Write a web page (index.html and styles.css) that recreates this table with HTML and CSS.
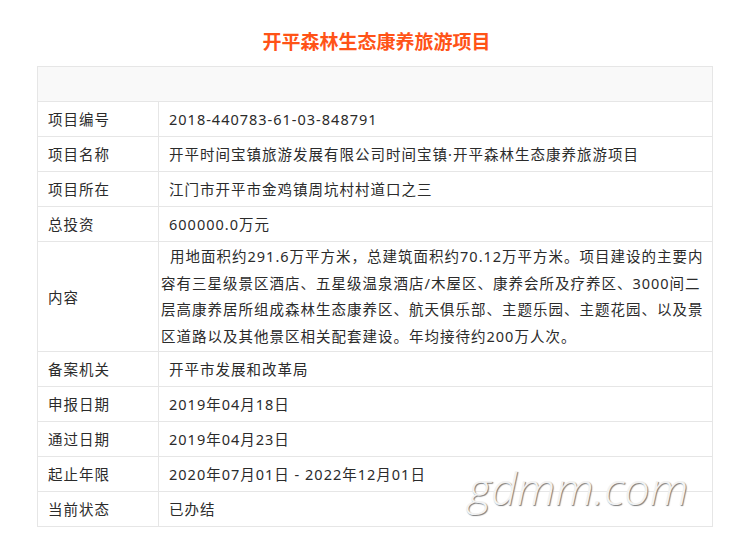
FILE: index.html
```html
<!DOCTYPE html>
<html lang="zh-CN">
<head>
  <meta charset="UTF-8" />
  <meta name="viewport" content="width=device-width, initial-scale=1" />
  <title>开平森林生态康养旅游项目</title>
  <link rel="stylesheet" href="styles.css">
</head>
<body>

  <div class="page">
    <h1 class="project-title">开平森林生态康养旅游项目</h1>

    <table class="info-table">
      <tr class="head-row">
        <td colspan="2"></td>
      </tr>
      <tr>
        <td class="label">项目编号</td>
        <td>2018-440783-61-03-848791</td>
      </tr>
      <tr>
        <td class="label">项目名称</td>
        <td>开平时间宝镇旅游发展有限公司时间宝镇·开平森林生态康养旅游项目</td>
      </tr>
      <tr>
        <td class="label">项目所在</td>
        <td>江门市开平市金鸡镇周坑村村道口之三</td>
      </tr>
      <tr>
        <td class="label">总投资</td>
        <td>600000.0万元</td>
      </tr>
      <tr>
        <td class="label">内容</td>
        <td class="content">用地面积约291.6万平方米，总建筑面积约70.12万平方米。项目建设的主要内容有三星级景区酒店、五星级温泉酒店/木屋区、康养会所及疗养区、3000间二层高康养居所组成森林生态康养区、航天俱乐部、主题乐园、主题花园、以及景区道路以及其他景区相关配套建设。年均接待约200万人次。</td>
      </tr>
      <tr>
        <td class="label">备案机关</td>
        <td>开平市发展和改革局</td>
      </tr>
      <tr>
        <td class="label">申报日期</td>
        <td>2019年04月18日</td>
      </tr>
      <tr>
        <td class="label">通过日期</td>
        <td>2019年04月23日</td>
      </tr>
      <tr>
        <td class="label">起止年限</td>
        <td>2020年07月01日 - 2022年12月01日</td>
      </tr>
      <tr>
        <td class="label">当前状态</td>
        <td>已办结</td>
      </tr>
    </table>

    <div class="watermark">gdmm.com</div>
  </div>

</body>
</html>
```

FILE: styles.css
```css
* {
  box-sizing: border-box;
  margin: 0;
  padding: 0;
}

body {
  font-family: 'Noto Sans', 'Noto Sans CJK SC', sans-serif;
  background: #fff;
  color: #2b2b2b;
}

.page {
  position: relative;
  padding: 30px 24px 20px 37px;
}

.project-title {
  font-size: 19px;
  line-height: 24px;
  font-weight: 700;
  color: #ff5317;
  text-align: center;
  margin-bottom: 12px;
  padding-left: 3px;
}

.info-table {
  width: 100%;
  border-collapse: collapse;
  border: 1px solid #e6e6e6;
  font-size: 14.5px;
  letter-spacing: 1px;
}

.info-table td {
  border: 1px solid #e6e6e6;
  padding: 0 10px;
  height: 35px;
  line-height: 34px;
  vertical-align: middle;
}

.head-row td {
  background: #f9f9f9;
}

.info-table .label {
  width: 121px;
}

.info-table .content {
  line-height: 26.6px;
  padding: 1px 8px 2px 2px;
  text-indent: 9px;
}

.watermark {
  position: absolute;
  left: 468px;
  top: 457px;
  font-family: 'Open Sans', sans-serif;
  font-style: italic;
  font-weight: 300;
  font-size: 45px;
  color: #f2f2f2;
  text-shadow: 1px 1px 1px #7a7a7a;
  pointer-events: none;
}
```
